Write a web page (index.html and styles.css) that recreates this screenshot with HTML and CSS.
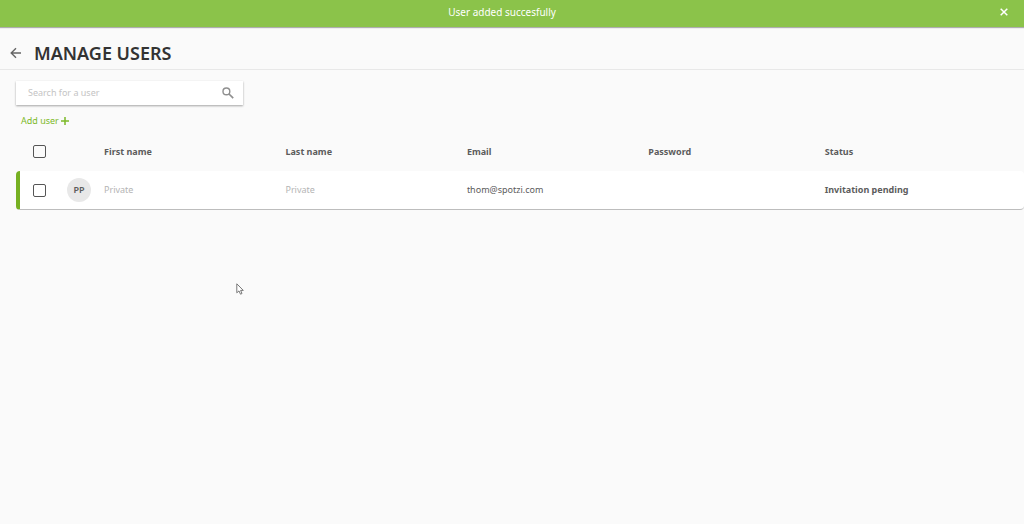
FILE: index.html
```html
<!DOCTYPE html>
<html lang="en">
<head>
  <meta charset="UTF-8">
  <title>Manage users</title>
  <link rel="stylesheet" href="styles.css">
</head>
<body>

<div class="notice" role="status">
  <span class="notice-text">User added succesfully</span>
  <button aria-label="Close">
    <svg width="8" height="8" viewBox="0 0 8 8"><path d="M0.7 0.7L7.3 7.3M7.3 0.7L0.7 7.3" stroke="#fff" stroke-width="1.5"/></svg>
  </button>
</div>

<header class="page-header">
  <a href="#" class="back" aria-label="Back">
    <svg width="12" height="12" viewBox="0 0 12 12"><path d="M11 6H1.8M6 1.2L1.2 6L6 10.8" fill="none" stroke="#666" stroke-width="1.4"/></svg>
  </a>
  <h1>MANAGE USERS</h1>
</header>

<main class="content">
  <form class="search">
    <input type="text" id="search" placeholder="Search for a user" aria-label="Search for a user">
    <button type="button" aria-label="Search">
      <svg width="12" height="12" viewBox="0 0 12 12"><circle cx="4.4" cy="4.4" r="3.4" fill="none" stroke="#8f8f8f" stroke-width="1.4"/><path d="M7 7L11.2 11.2" stroke="#8f8f8f" stroke-width="1.7"/></svg>
    </button>
  </form>

  <button class="add-user">Add user
    <svg width="8" height="8" viewBox="0 0 8 8"><path d="M4 0V8M0 4H8" stroke="#7cb928" stroke-width="1.5"/></svg>
  </button>

  <table class="users">
    <colgroup>
      <col class="col-check">
      <col class="col-avatar">
      <col class="col-name">
      <col class="col-name">
      <col class="col-name">
      <col class="col-password">
      <col>
    </colgroup>
    <thead>
      <tr>
        <th><input type="checkbox" aria-label="Select all users"></th>
        <th></th>
        <th>First name</th>
        <th>Last name</th>
        <th>Email</th>
        <th>Password</th>
        <th>Status</th>
      </tr>
    </thead>
    <tbody>
      <tr>
        <td><input type="checkbox" aria-label="Select user"></td>
        <td><span class="avatar">PP</span></td>
        <td class="muted">Private</td>
        <td class="muted">Private</td>
        <td>thom@spotzi.com</td>
        <td></td>
        <td class="status">Invitation pending</td>
      </tr>
    </tbody>
  </table>
</main>

<!-- mouse pointer -->
<svg class="pointer" width="8" height="12" viewBox="0 0 8 12"><path d="M0.8 0.8V9.8L3 7.9L4.5 11.2L6 10.5L4.6 7.4H7.3Z" fill="#fff" stroke="#777" stroke-width="1"/></svg>

</body>
</html>
```

FILE: styles.css
```css
* {
  box-sizing: border-box;
}
body {
  margin: 0;
  background: #fafafa;
  color: #5c5c5c;
  font-family: "Noto Sans", "Open Sans", sans-serif;
  font-size: 9px;
  line-height: 12px;
}
button {
  padding: 0;
  border: none;
  background: none;
  font: inherit;
  cursor: pointer;
}
svg {
  display: block;
}

/* Top message */
.notice {
  display: flex;
  align-items: center;
  height: 27px;
  padding: 0 16px 3px 4px;
  background: #8bc34a;
  color: #fff;
  font-size: 10px;
  box-shadow: 0 1px 1px rgba(0, 0, 0, .3);
}
.notice-text {
  flex: 1;
  text-align: center;
}

/* Title */
.page-header {
  display: flex;
  align-items: center;
  height: 43px;
  padding: 10px 10px 0;
  border-bottom: 1px solid #e8e8e8;
}
.back {
  margin-right: 12px;
}
h1 {
  margin: 0;
  color: #333;
  font-size: 18px;
  font-weight: 600;
  line-height: 24px;
}

.content {
  padding: 11px 0 0 16px;
}
.search {
  display: flex;
  align-items: center;
  width: 227px;
  height: 24px;
  padding: 0 9px 0 12px;
  background: #fff;
  box-shadow: 0 1px 2px rgba(0, 0, 0, .35);
}
.search input {
  flex: 1;
  min-width: 0;
  padding: 0;
  border: none;
  outline: none;
  background: none;
  color: #5c5c5c;
  font: inherit;
}
.search input::placeholder {
  color: #c4c4c4;
}
.add-user {
  display: flex;
  align-items: center;
  gap: 2px;
  margin: 10px 0 5px 5px;
  color: #7cb928;
}

/* Users table */
.users {
  width: 100%;
  table-layout: fixed;
  border-collapse: separate;
  border-spacing: 0;
}
.col-check {
  width: 51px;
}
.col-avatar {
  width: 37px;
}
.col-name {
  width: 18%;
}
.col-password {
  width: 17.5%;
}
.users th,
.users td {
  height: 39px;
  padding: 0;
  text-align: left;
  vertical-align: middle;
}
.users tbody td {
  border-bottom: 1px solid #bdbdbd;
  background: #fff;
}
.users th:first-child,
.users td:first-child {
  padding-left: 13px;
  border-left: 4px solid transparent;
}
.users tbody td:first-child {
  border-left-color: #76b022;
  border-radius: 4px 0 0 4px;
}
.users tbody td:last-child {
  border-radius: 0 4px 4px 0;
}
.users input {
  display: block;
  appearance: none;
  width: 13px;
  height: 13px;
  margin: 0;
  border: 1px solid #555;
  border-radius: 2px;
}
.users input:checked {
  background: #76b022;
}
.avatar {
  display: flex;
  align-items: center;
  justify-content: center;
  width: 24px;
  height: 24px;
  border-radius: 50%;
  background: #e8e8e8;
  font-weight: 600;
}
.users .muted {
  color: #b4b4b4;
}
.status {
  font-weight: 700;
}

.pointer {
  position: absolute;
  left: 236px;
  top: 283px;
}
```
